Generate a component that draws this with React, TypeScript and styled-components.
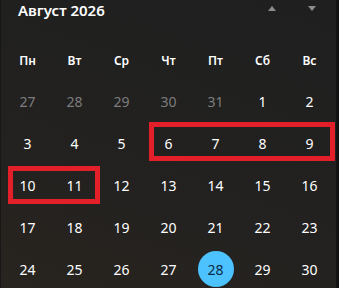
import React from 'react';
import styled, { createGlobalStyle } from 'styled-components';

const GlobalStyle = createGlobalStyle`
  html, body {
    margin: 0;
    padding: 0;
    background: #1f1f1f;
  }
`;

// --------------- Calendar frame

const Panel = styled.div`
  position: relative;
  width: 339px;
  height: 288px;
  overflow: hidden;
  box-sizing: border-box;
  border-left: 1px solid #171717;
  border-right: 3px solid #121212;
  background: linear-gradient(20deg, #28241f 0%, #222120 45%, #1f1f1f 100%);
  font-family: 'Noto Sans', 'Open Sans', sans-serif;
  color: #ffffff;
`;

const Header = styled.div`
  display: flex;
  align-items: flex-start;
  justify-content: space-between;
  height: 40px;
  padding: 0 20px 0 17px;
`;

const Title = styled.div`
  font-size: 15px;
  font-weight: 600;
  line-height: 20px;
`;

const Arrows = styled.div`
  display: flex;
  gap: 32px;
  padding-top: 6px;
`;

const Arrow = styled.span<{ $down?: boolean }>`
  width: 0;
  height: 0;
  border-left: 4px solid transparent;
  border-right: 4px solid transparent;
  ${({ $down }) =>
    $down ? 'border-top: 5px solid #8c8c8c;' : 'border-bottom: 5px solid #8c8c8c;'}
`;

const Grid = styled.div<{ $rowHeight: number }>`
  display: grid;
  grid-template-columns: repeat(7, 47px);
  grid-auto-rows: ${({ $rowHeight }) => $rowHeight}px;
  padding-left: 3px;
`;

const WeekDay = styled.div`
  display: flex;
  align-items: center;
  justify-content: center;
  font-size: 12px;
  font-weight: 600;
`;

const Day = styled.div<{ $muted?: boolean }>`
  display: flex;
  align-items: center;
  justify-content: center;
  font-size: 14px;
  color: ${({ $muted }) => ($muted ? '#7d7d7d' : '#ffffff')};
`;

const Today = styled.span`
  display: flex;
  align-items: center;
  justify-content: center;
  width: 36px;
  height: 36px;
  border-radius: 50%;
  background: #4cc2ff;
  color: #0b2a4a;
`;

// annotation frames drawn over the grid
const Mark = styled.div`
  position: absolute;
  box-sizing: border-box;
  border: 5px solid #e3202a;
`;

const weekDays = ['Пн', 'Вт', 'Ср', 'Чт', 'Пт', 'Сб', 'Вс'];

const days: { n: number; muted?: boolean }[] = [
  ...[27, 28, 29, 30, 31].map((n) => ({ n, muted: true })),
  ...Array.from({ length: 30 }, (_, i) => ({ n: i + 1 })),
];

const marks = [
  { left: 148, top: 122, width: 186, height: 39 },
  { left: 7, top: 166, width: 92, height: 38 },
];

const App = (): JSX.Element => (
  <>
    <GlobalStyle />
    <Panel>
      <Header>
        <Title>Август 2026</Title>
        <Arrows>
          <Arrow />
          <Arrow $down />
        </Arrows>
      </Header>
      <Grid $rowHeight={40}>
        {weekDays.map((d) => (
          <WeekDay key={d}>{d}</WeekDay>
        ))}
      </Grid>
      <Grid $rowHeight={42}>
        {days.map((d, i) => (
          <Day key={i} $muted={d.muted}>
            {d.n === 28 && !d.muted ? <Today>{d.n}</Today> : d.n}
          </Day>
        ))}
      </Grid>
      {marks.map((m, i) => (
        <Mark key={i} style={m} />
      ))}
    </Panel>
  </>
);

export default App;
